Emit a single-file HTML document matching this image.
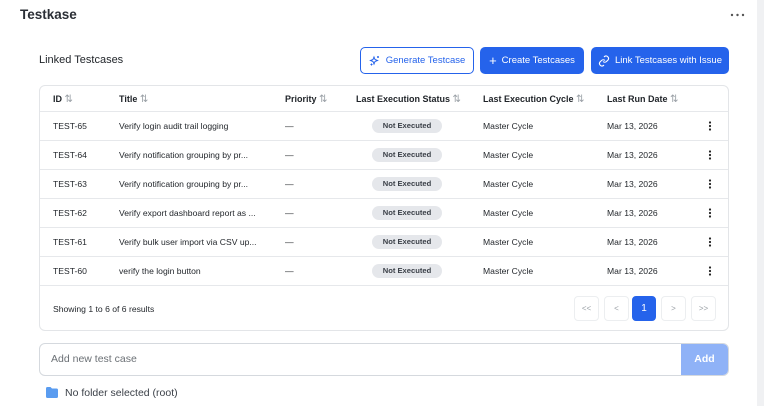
<!DOCTYPE html>
<html><head><style>
*{box-sizing:border-box;margin:0;padding:0}
body{width:764px;height:406px;background:#fff;font-family:"Liberation Sans",sans-serif;color:#1f2328;position:relative;overflow:hidden;font-size:9px}
.a{position:absolute}
.strip{left:757px;top:0;width:7px;height:406px;background:#f0f1f3}
h1{position:absolute;left:20px;top:7px;font-size:13.5px;font-weight:bold;color:#2b2f36}
.btn{position:absolute;top:47px;height:27px;border-radius:5px;font-size:9.5px;display:flex;align-items:center;justify-content:center;gap:5px}
.pri{background:#2563eb;color:#fff}
.tbl{left:39px;top:85px;width:690px;height:246px;border:1px solid #e3e5e8;border-radius:6px}
.hl{left:40px;width:688px;height:1px;background:#e6e8eb}
.th{font-weight:bold;font-size:9px;top:94px}
.s{color:#9aa0a6;font-weight:normal;font-size:10px}
.td{font-size:8.6px}
.badge{left:372px;width:70px;height:14px;border-radius:7px;background:#e5e7eb;font-size:7.6px;font-weight:bold;color:#3b4048;text-align:center;line-height:14px}
.pg{top:296px;width:25px;height:25px;border:1px solid #eceef0;border-radius:4px;color:#9aa0a6;font-size:8px;text-align:center;line-height:23px}
.k{left:708px}
</style></head><body>
<div class="a strip"></div>
<h1>Testkase</h1>
<svg class="a" style="left:730px;top:13px" width="16" height="4"><circle cx="2" cy="2" r="1.2" fill="#555"/><circle cx="7.5" cy="2" r="1.2" fill="#555"/><circle cx="13" cy="2" r="1.2" fill="#555"/></svg>
<div class="a" style="left:39px;top:54px;font-size:11px;color:#1f2328">Linked Testcases</div>
<div class="btn" style="left:360px;width:114px;border:1px solid #2563eb;color:#2563eb">
<svg width="12" height="12" viewBox="0 0 24 24" fill="none" stroke="#2563eb" stroke-width="2"><path d="M10 4l2 5 5 2-5 2-2 5-2-5-5-2 5-2z"/><path d="M18 2v4M16 4h4M5 17v4M3 19h4"/></svg>Generate Testcase</div>
<div class="btn pri" style="left:480px;width:104px"><span style="font-size:13px;line-height:1">+</span>Create Testcases</div>
<div class="btn pri" style="left:591px;width:138px">
<svg width="12" height="12" viewBox="0 0 24 24" fill="none" stroke="#fff" stroke-width="2.2"><path d="M10 13a5 5 0 0 0 7 0l3-3a5 5 0 0 0-7-7l-1 1"/><path d="M14 11a5 5 0 0 0-7 0l-3 3a5 5 0 0 0 7 7l1-1"/></svg>Link Testcases with Issue</div>
<div class="a tbl"></div>
<div class="a th" style="left:53px">ID <span class="s">⇅</span></div>
<div class="a th" style="left:119px">Title <span class="s">⇅</span></div>
<div class="a th" style="left:285px">Priority <span class="s">⇅</span></div>
<div class="a th" style="left:356px">Last Execution Status <span class="s">⇅</span></div>
<div class="a th" style="left:483px">Last Execution Cycle <span class="s">⇅</span></div>
<div class="a th" style="left:607px">Last Run Date <span class="s">⇅</span></div>
<div class="a hl" style="top:111px"></div>
<div class="a hl" style="top:140px"></div>
<div class="a hl" style="top:169px"></div>
<div class="a hl" style="top:198px"></div>
<div class="a hl" style="top:227px"></div>
<div class="a hl" style="top:256px"></div>
<div class="a hl" style="top:285px"></div>
<div class="a td" style="left:53px;top:121px">TEST-65</div><div class="a td" style="left:119px;top:121px">Verify login audit trail logging</div><div class="a td" style="left:285px;top:121px">—</div><div class="a badge" style="top:119px">Not Executed</div><div class="a td" style="left:483px;top:121px">Master Cycle</div><div class="a td" style="left:607px;top:121px">Mar 13, 2026</div>
<div class="a td" style="left:53px;top:150px">TEST-64</div><div class="a td" style="left:119px;top:150px">Verify notification grouping by pr...</div><div class="a td" style="left:285px;top:150px">—</div><div class="a badge" style="top:148px">Not Executed</div><div class="a td" style="left:483px;top:150px">Master Cycle</div><div class="a td" style="left:607px;top:150px">Mar 13, 2026</div>
<div class="a td" style="left:53px;top:179px">TEST-63</div><div class="a td" style="left:119px;top:179px">Verify notification grouping by pr...</div><div class="a td" style="left:285px;top:179px">—</div><div class="a badge" style="top:177px">Not Executed</div><div class="a td" style="left:483px;top:179px">Master Cycle</div><div class="a td" style="left:607px;top:179px">Mar 13, 2026</div>
<div class="a td" style="left:53px;top:208px">TEST-62</div><div class="a td" style="left:119px;top:208px">Verify export dashboard report as ...</div><div class="a td" style="left:285px;top:208px">—</div><div class="a badge" style="top:206px">Not Executed</div><div class="a td" style="left:483px;top:208px">Master Cycle</div><div class="a td" style="left:607px;top:208px">Mar 13, 2026</div>
<div class="a td" style="left:53px;top:237px">TEST-61</div><div class="a td" style="left:119px;top:237px">Verify bulk user import via CSV up...</div><div class="a td" style="left:285px;top:237px">—</div><div class="a badge" style="top:235px">Not Executed</div><div class="a td" style="left:483px;top:237px">Master Cycle</div><div class="a td" style="left:607px;top:237px">Mar 13, 2026</div>
<div class="a td" style="left:53px;top:266px">TEST-60</div><div class="a td" style="left:119px;top:266px">verify the login button</div><div class="a td" style="left:285px;top:266px">—</div><div class="a badge" style="top:264px">Not Executed</div><div class="a td" style="left:483px;top:266px">Master Cycle</div><div class="a td" style="left:607px;top:266px">Mar 13, 2026</div>
<svg class="a k" style="top:121px" width="4" height="10"><circle cx="2" cy="1.5" r="1.1" fill="#222"/><circle cx="2" cy="5" r="1.1" fill="#222"/><circle cx="2" cy="8.5" r="1.1" fill="#222"/></svg>
<svg class="a k" style="top:150px" width="4" height="10"><circle cx="2" cy="1.5" r="1.1" fill="#222"/><circle cx="2" cy="5" r="1.1" fill="#222"/><circle cx="2" cy="8.5" r="1.1" fill="#222"/></svg>
<svg class="a k" style="top:179px" width="4" height="10"><circle cx="2" cy="1.5" r="1.1" fill="#222"/><circle cx="2" cy="5" r="1.1" fill="#222"/><circle cx="2" cy="8.5" r="1.1" fill="#222"/></svg>
<svg class="a k" style="top:208px" width="4" height="10"><circle cx="2" cy="1.5" r="1.1" fill="#222"/><circle cx="2" cy="5" r="1.1" fill="#222"/><circle cx="2" cy="8.5" r="1.1" fill="#222"/></svg>
<svg class="a k" style="top:237px" width="4" height="10"><circle cx="2" cy="1.5" r="1.1" fill="#222"/><circle cx="2" cy="5" r="1.1" fill="#222"/><circle cx="2" cy="8.5" r="1.1" fill="#222"/></svg>
<svg class="a k" style="top:266px" width="4" height="10"><circle cx="2" cy="1.5" r="1.1" fill="#222"/><circle cx="2" cy="5" r="1.1" fill="#222"/><circle cx="2" cy="8.5" r="1.1" fill="#222"/></svg>
<div class="a td" style="left:53px;top:304px">Showing 1 to 6 of 6 results</div>
<div class="a pg" style="left:574px">&lt;&lt;</div>
<div class="a pg" style="left:604px">&lt;</div>
<div class="a pg" style="left:632px;width:24px;background:#2563eb;border-color:#2563eb;color:#fff;font-size:10px">1</div>
<div class="a pg" style="left:661px">&gt;</div>
<div class="a pg" style="left:691px">&gt;&gt;</div>
<div class="a" style="left:39px;top:343px;width:690px;height:33px;border:1px solid #d5d9de;border-radius:6px;overflow:hidden">
<div class="a" style="left:11px;top:9px;font-size:10.5px;color:#6b7075">Add new test case</div>
<div class="a" style="right:0;top:0;width:47px;height:33px;background:#8fb2f7;color:#fff;font-weight:bold;font-size:10.5px;text-align:center;line-height:31px">Add</div>
</div>
<svg class="a" style="left:46px;top:387px" width="12" height="11" viewBox="0 0 12 11"><path d="M0 1.5Q0 0 1.5 0H4.5L6 1.5H10.5Q12 1.5 12 3V9.5Q12 11 10.5 11H1.5Q0 11 0 9.5Z" fill="#5a9cf0"/></svg>
<div class="a" style="left:65px;top:387px;font-size:10.5px;color:#3b4048">No folder selected (root)</div>
</body></html>
